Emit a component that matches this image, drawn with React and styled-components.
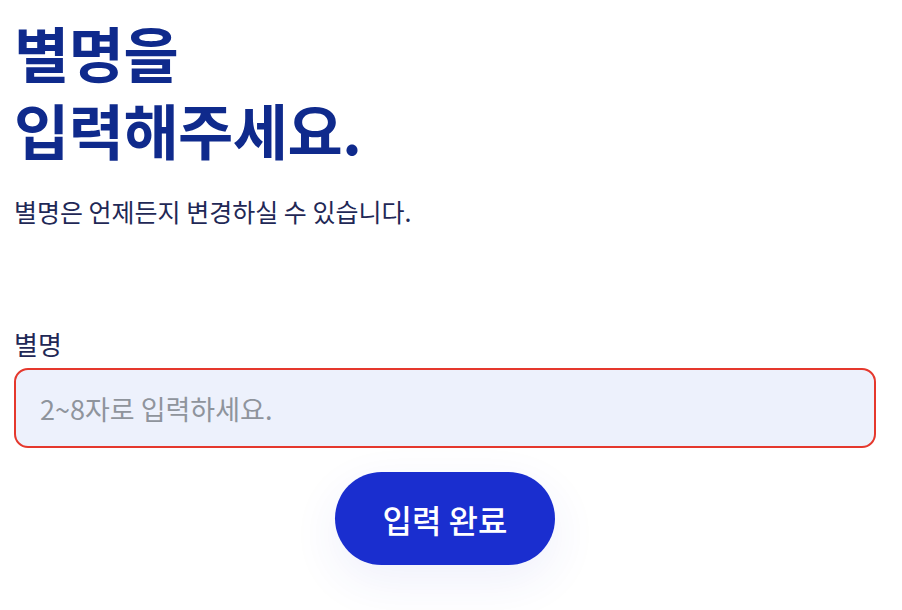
import React from "react";
import styled, { createGlobalStyle } from "styled-components";

const GlobalStyle = createGlobalStyle`
    * { box-sizing: border-box; }
    body {
        margin: 0;
        background: #ffffff;
        font-family: "Noto Sans CJK KR", "Noto Sans", sans-serif;
    }
`;

const Page = styled.div`
    width: 862px;
    margin-left: 14px;
    padding: 13px 0 48px;
    display: flex;
    flex-direction: column;
`;

const Title = styled.h1`
    margin: 0;
    font-size: 60px;
    line-height: 77px;
    font-weight: 700;
    color: #0f2a8c;
    letter-spacing: -0.5px;
`;

const Subtitle = styled.p`
    margin: 26px 0 0;
    font-size: 25px;
    line-height: 36px;
    color: #1f2856;
`;

const Label = styled.label`
    margin-top: 97px;
    font-size: 26px;
    line-height: 36px;
    font-weight: 400;
    color: #1f2856;
`;

const Input = styled.input`
    margin-top: 6px;
    height: 80px;
    padding: 0 24px;
    border: 2px solid #e5382d;
    border-radius: 14px;
    background: #edf1fc;
    font-family: inherit;
    font-size: 27px;
    color: #1f2856;
    outline: none;
    &::placeholder {
        color: #8f949c;
    }
`;

const Actions = styled.div`
    display: flex;
    justify-content: center;
    margin-top: 24px;
`;

const SubmitButton = styled.button`
    width: 220px;
    height: 93px;
    border: none;
    border-radius: 47px;
    background: #1a2ecf;
    color: #ffffff;
    font-family: inherit;
    font-size: 32px;
    font-weight: 500;
    box-shadow: 0 16px 48px rgba(50, 70, 200, 0.08);
`;

const App = () => (
    <>
        <GlobalStyle />
        <Page>
            <Title>
                별명을
                <br />
                입력해주세요.
            </Title>
            <Subtitle>별명은 언제든지 변경하실 수 있습니다.</Subtitle>
            <Label htmlFor="nickname">별명</Label>
            <Input id="nickname" placeholder="2~8자로 입력하세요." />
            <Actions>
                <SubmitButton type="button">입력 완료</SubmitButton>
            </Actions>
        </Page>
    </>
);

export default App;
